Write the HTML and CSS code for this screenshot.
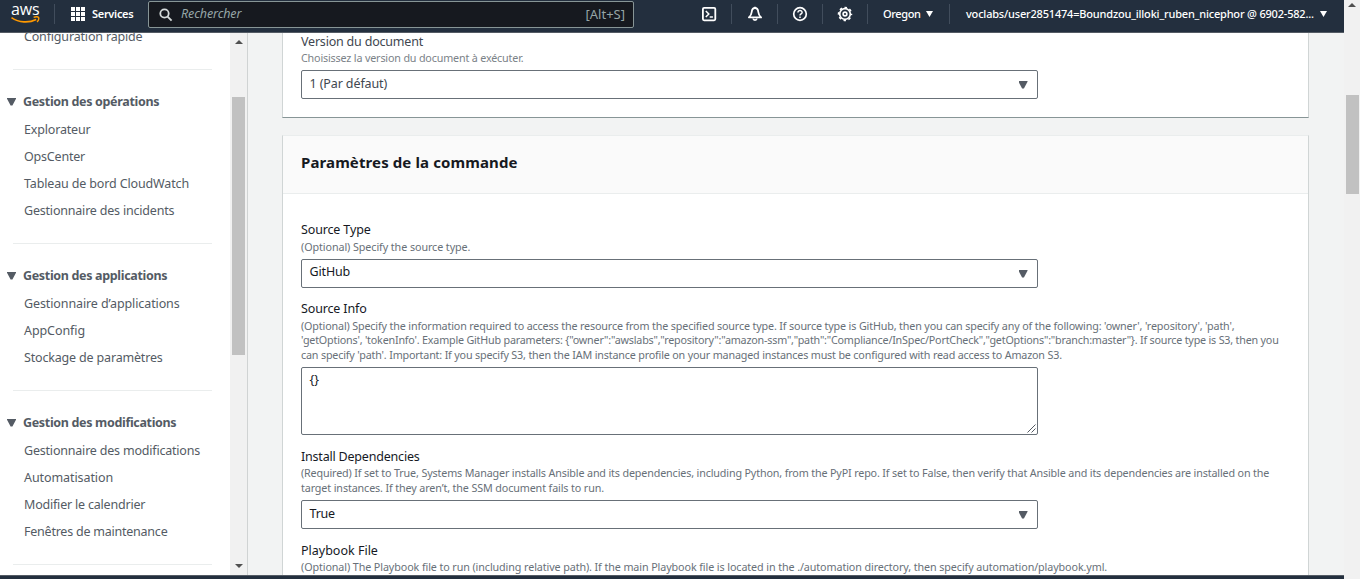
FILE: index.html
```
<!DOCTYPE html>
<html lang="fr">
<head>
<meta charset="utf-8">
<title>AWS Systems Manager</title>
<link rel="stylesheet" href="styles.css">
</head>
<body>
<div class="window">
  <div class="app">
    <header class="topbar">
      <div class="logo">
        <span class="logo-text">aws</span>
        <svg class="logo-smile" width="30" height="9" viewBox="0 0 30 9"><path d="M.5 1.600C8 6.800 18 7.200 25.200 3.400" fill="none" stroke="#f90" stroke-width="1.700"/><path d="M22.600 1.400c2-.8 4.200-.8 5 0 .4 1-.2 3.200-1.500 4.600" fill="none" stroke="#f90" stroke-width="1.400"/></svg>
      </div>
      <i class="divider"></i>
      <div class="services">
        <svg width="14" height="14" viewBox="0 0 14 14" fill="#fff"><path d="M0 0h4v4H0zM5 0h4v4H5zM10 0h4v4h-4zM0 5h4v4H0zM5 5h4v4H5zM10 5h4v4h-4zM0 10h4v4H0zM5 10h4v4H5zM10 10h4v4h-4z"/></svg>
        <span class="services-label">Services</span>
      </div>
      <div class="search">
        <svg width="14" height="14" viewBox="0 0 14 14" fill="none" stroke="#d5dbdb" stroke-width="1.800"><circle cx="5.500" cy="5.500" r="4.200"/><path d="M8.600 8.600l4 4"/></svg>
        <span class="placeholder">Rechercher</span>
        <span class="shortcut">[Alt+S]</span>
      </div>
      <div class="tool first"><svg width="16" height="16" viewBox="0 0 16 16" fill="none" stroke="#fff" stroke-width="1.800"><rect x="1.900" y="1.900" width="12.400" height="12.400" rx="1.200"/><path d="M4.800 5l3 3-3 3M8.700 11h3.200" stroke-width="1.500"/></svg></div>
      <i class="divider"></i>
      <div class="tool wide"><svg width="16" height="16" viewBox="0 0 16 16" fill="none" stroke="#fff" stroke-width="1.800" stroke-linejoin="round"><path d="M8 2c-2.200 0-3.100 1.800-3.300 4C4.500 8.700 3.700 9.800 1.900 11.400h12.200c-1.800-1.600-2.600-2.700-2.800-5.400-.2-2.200-1.100-4-3.300-4z"/><path d="M6.200 12.500c.2 2.200 3.400 2.200 3.600 0M8 .8v1.500"/></svg></div>
      <i class="divider"></i>
      <div class="tool"><svg width="16" height="16" viewBox="0 0 16 16" fill="none" stroke="#fff" stroke-width="1.700"><circle cx="8" cy="8" r="6.300"/><path d="M5.900 6.600c0-2.800 4.300-2.600 4.200-.2 0 1.500-2.100 1.500-2.100 3.100M8 10.400v1.700" stroke-width="1.500"/></svg></div>
      <i class="divider"></i>
      <div class="tool"><svg width="16" height="16" viewBox="0 0 16 16" fill="none" stroke="#fff"><circle cx="8" cy="8" r="5.300" stroke-width="1.700"/><circle cx="8" cy="8" r="6.500" stroke-width="1.500" stroke-dasharray="2.500 2.605" stroke-dashoffset="1.250"/><circle cx="8" cy="8" r="1.900" stroke-width="1.600"/></svg></div>
      <i class="divider"></i>
      <div class="region"><span class="region-label">Oregon</span><svg width="7" height="6" viewBox="0 0 7 6"><path d="M0 0h7L3.500 6z" fill="#fff"/></svg></div>
      <i class="divider"></i>
      <div class="account"><span class="account-label">voclabs/user2851474=Boundzou_illoki_ruben_nicephor @ 6902-582...</span><svg width="7" height="6" viewBox="0 0 7 6"><path d="M0 0h7L3.500 6z" fill="#fff"/></svg></div>
    </header>

    <div class="body">
      <aside class="sidebar">
        <nav class="nav">
          <a class="item t17">Configuration rapide</a>
          <hr>
          <h3><i class="caret"></i><span>Gestion des opérations</span></h3>
          <a class="item t17">Explorateur</a>
          <a class="item t20">OpsCenter</a>
          <a class="item t14">Tableau de bord CloudWatch</a>
          <a class="item t20">Gestionnaire des incidents</a>
          <hr>
          <h3><i class="caret"></i><span>Gestion des applications</span></h3>
          <a class="item t11">Gestionnaire d’applications</a>
          <a class="item t08">AppConfig</a>
          <a class="item t17">Stockage de paramètres</a>
          <hr>
          <h3><i class="caret"></i><span>Gestion des modifications</span></h3>
          <a class="item t20">Gestionnaire des modifications</a>
          <a class="item t08">Automatisation</a>
          <a class="item t20">Modifier le calendrier</a>
          <a class="item t23">Fenêtres de maintenance</a>
          <hr>
        </nav>
        <div class="scrollbar side-scroll"><i class="arrow up"></i><i class="thumb"></i><i class="arrow down"></i></div>
      </aside>

      <main class="content">
        <section class="card version">
          <div class="label soft t20">Version du document</div>
          <div class="help soft t17">Choisissez la version du document à exécuter.</div>
          <div class="select soft low"><span class="t11">1 (Par défaut)</span><i class="caret"></i></div>
        </section>

        <section class="card params">
          <h2>Paramètres de la commande</h2>
          <div class="field">
            <div class="label t14">Source Type</div>
            <div class="help t08">(Optional) Specify the source type.</div>
            <div class="select"><span class="t14">GitHub</span><i class="caret"></i></div>
          </div>
          <div class="field">
            <div class="label t14">Source Info</div>
            <div class="help"><span class="line t15">(Optional) Specify the information required to access the resource from the specified source type. If source type is GitHub, then you can specify any of the following: 'owner', 'repository', 'path',</span><span class="line t20">'getOptions', 'tokenInfo'. Example GitHub parameters: {"owner":"awslabs","repository":"amazon-ssm","path":"Compliance/InSpec/PortCheck","getOptions":"branch:master"}. If source type is S3, then you</span><span class="line t17">can specify 'path'. Important: If you specify S3, then the IAM instance profile on your managed instances must be configured with read access to Amazon S3.</span></div>
            <div class="textarea"><span>{}</span><svg class="grip" width="9" height="9" viewBox="0 0 9 9" fill="none" stroke="#545b64"><path d="M.5 8.500l8-8M4.500 8.500l4-4"/></svg></div>
          </div>
          <div class="field roomy">
            <div class="label t20">Install Dependencies</div>
            <div class="help"><span class="line t15">(Required) If set to True, Systems Manager installs Ansible and its dependencies, including Python, from the PyPI repo. If set to False, then verify that Ansible and its dependencies are installed on the</span><span class="line t12">target instances. If they aren’t, the SSM document fails to run.</span></div>
            <div class="select low"><span class="t20">True</span><i class="caret"></i></div>
          </div>
          <div class="field roomy">
            <div class="label">Playbook File</div>
            <div class="help t10">(Optional) The Playbook file to run (including relative path). If the main Playbook file is located in the ./automation directory, then specify automation/playbook.yml.</div>
          </div>
        </section>
      </main>
    </div>
    <footer class="footer"></footer>
  </div>
  <div class="scrollbar page-scroll"><i class="arrow up"></i><i class="thumb"></i></div>
</div>
</body>
</html>
```
FILE: styles.css
```
* { box-sizing: border-box; }
body {
  margin: 0;
  font-family: "Noto Sans", "Open Sans", sans-serif;
  font-size: 12.5px;
  color: #16191f;
  overflow: hidden;
}
.window { display: flex; width: 1360px; height: 579px; }
.app { display: flex; flex-direction: column; width: 1344px; height: 579px; }

/* letter tracking */
.t08 { letter-spacing: -.08px; }
.t10 { letter-spacing: -.1px; }
.t11 { letter-spacing: -.11px; }
.t12 { letter-spacing: -.125px; }
.t14 { letter-spacing: -.145px; }
.t15 { letter-spacing: -.148px; }
.t17 { letter-spacing: -.172px; }
.t20 { letter-spacing: -.2px; }
.t23 { letter-spacing: -.23px; }

/* top bar */
.topbar {
  display: flex;
  flex: none;
  height: 33px;
  background: #232f3e;
  border-bottom: 1px solid #545b64;
  color: #fff;
  white-space: nowrap;
}
.divider { flex: none; width: 1px; height: 20px; margin-top: 4px; background: #414d5c; }
.logo { flex: none; width: 54px; padding-left: 11px; }
.logo-text {
  display: block;
  height: 16px;
  padding-left: 0;
  font: 500 16px/16px "Open Sans", sans-serif;
  letter-spacing: -.2px;
  margin-top: 1px;
}
.logo-smile { display: block; margin-top: -1px; }
.services { display: flex; flex: none; align-items: center; width: 93px; height: 28px; padding-left: 16px; }
.services-label { margin-left: 7px; padding-bottom: 2px; font-size: 11px; font-weight: 600; letter-spacing: -.3px; }
.search {
  display: flex;
  flex: none;
  align-items: center;
  width: 486px;
  height: 27px;
  margin-top: 1px;
  padding: 0 8px 0 10px;
  border: 1px solid #879596;
  border-radius: 2px;
  background: #16191f;
  color: #95a5a6;
}
.placeholder { flex: 1; margin-left: 8px; padding-bottom: 2px; font-size: 12.5px; font-style: italic; letter-spacing: -.1px; }
.shortcut { padding-bottom: 2px; font-size: 13px; }
.tool { display: flex; flex: none; align-items: center; justify-content: center; width: 44px; height: 28px; }
.tool.first { margin-left: 53px; }
.tool.wide { width: 45px; }
.region, .account { display: flex; flex: none; align-items: center; height: 28px; font-size: 11px; font-weight: 500; }
.region { width: 81px; padding-left: 15px; }
.account { padding-left: 16px; }
.region span, .account span { padding-bottom: 2px; }
.region-label { width: 43px; letter-spacing: -.38px; }
.account-label { width: 354px; letter-spacing: -.19px; }

/* scrollbars */
.scrollbar { display: flex; flex-direction: column; align-items: center; flex: none; background: #f1f1f1; }
.thumb { width: 13px; background: #c1c1c1; }
.arrow { border: 4px solid transparent; }
.arrow.up { border-top: 0; border-bottom-color: #505050; }
.arrow.down { border-bottom: 0; border-top-color: #505050; }
.page-scroll { width: 16px; padding-top: 3px; }
.page-scroll .thumb { height: 99px; margin-top: 88px; margin-left: 1px; }
.side-scroll { width: 17px; padding-top: 7px; }
.side-scroll .thumb { height: 258px; margin-top: 53px; }
.side-scroll .arrow.down { margin-top: 209px; }

/* side navigation */
.body { display: flex; flex: 1; min-height: 0; overflow: hidden; }
.sidebar { display: flex; flex: none; width: 248px; height: 542px; overflow: hidden; background: #fff; border-right: 1px solid #d0d3d3; color: #545b64; }
.nav { width: 230px; margin-top: -10px; }
.item { display: block; height: 27px; padding-left: 24px; line-height: 27px; white-space: nowrap; }
.nav hr { height: 1px; margin: 19px 18px 18px 13px; border: 0; background: #eaeded; }
.nav h3 {
  display: flex;
  align-items: center;
  height: 28px;
  margin: 0;
  padding: 0 0 1px 7px;
  font-size: 12.5px;
  font-weight: 700;
  letter-spacing: -.33px;
  line-height: 27px;
  white-space: nowrap;
}
.nav h3 .caret { margin-right: 7px; }
.caret { flex: none; width: 9px; height: 8px; background: #545b64; clip-path: polygon(0 0, 100% 0, 100% 15%, 60% 100%, 40% 100%, 0 15%); }

/* content */
.content { flex: 1; height: 542px; padding: 0 35px 0 34px; overflow: hidden; background: #f2f3f3; }
.card { width: 1027px; padding: 0 18px; background: #fff; border: 1px solid #d0d5d5; }
.version { height: 85px; padding-top: .5px; border-top: 0; border-bottom-color: #879596; }
.params { height: 500px; margin-top: 17px; border-top-color: #eaeded; }
.params h2 {
  height: 58px;
  margin: 0 -18px 27.500px;
  padding-left: 18px;
  background: #fafafa;
  border-bottom: 1px solid #eaeded;
  font-size: 15px;
  font-weight: 700;
  letter-spacing: .11px;
  line-height: 52px;
}
.label { height: 16px; line-height: 16px; white-space: nowrap; }
.label.soft, .select.soft { color: #414750; }
.help { margin: 2px 0 5px; color: #687078; font-size: 10.750px; line-height: 14.500px; white-space: nowrap; }
.help.soft { margin: 1.500px 0 4.500px; color: #7b8288; }
.line { display: block; }
.field + .field { margin-top: 12.500px; }
.field + .roomy { margin-top: 13px; }
.roomy .label { height: 15.500px; padding-top: .5px; }
.roomy .help { margin-top: 2.500px; }
.select, .textarea { display: flex; justify-content: space-between; width: 737px; border: 1px solid #687078; border-radius: 2px; background: #fff; }
.select { align-items: center; height: 29px; padding: 0 9.500px 0 7.500px; }
.select span { padding-bottom: 4px; }
.select.low span { padding-bottom: 2px; }
.textarea { height: 68px; padding: 3px 1px 1px 7.500px; line-height: 17px; }
.grip { align-self: flex-end; }

.footer { flex: none; height: 4px; background: #232f3e; border-top: 1px solid #545b64; }
```
